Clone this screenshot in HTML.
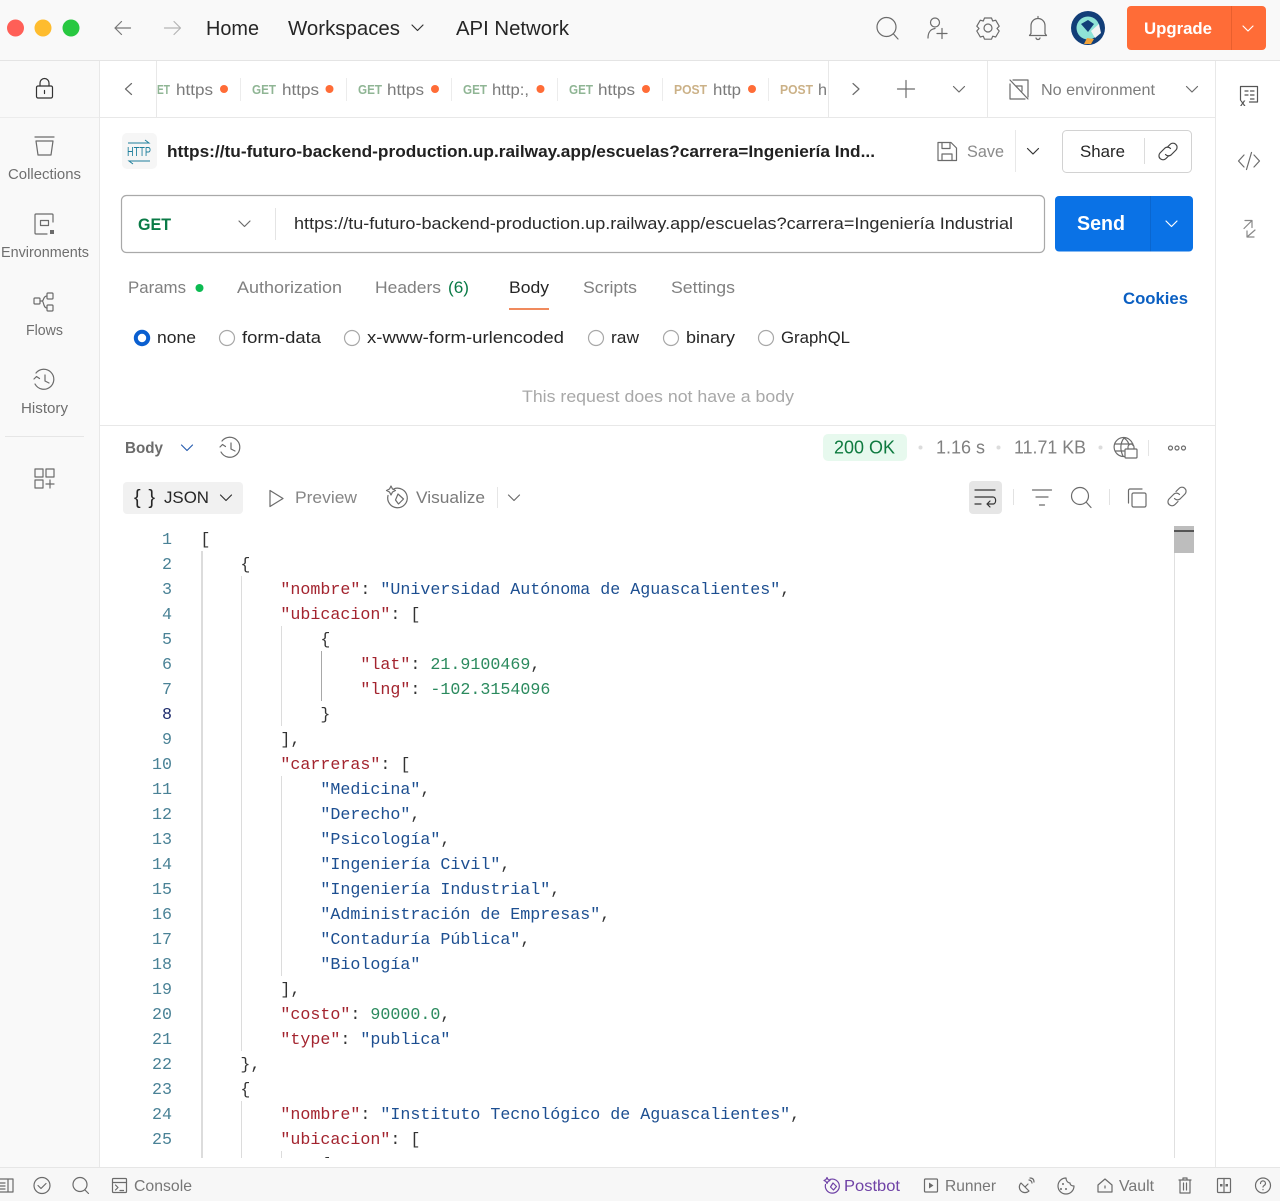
<!DOCTYPE html>
<html lang="en"><head><meta charset="utf-8"><title>Postman</title>
<style>
html,body{margin:0;padding:0;background:#fff;width:1280px;height:1201px;overflow:hidden}
svg{display:block;filter:blur(.3px)}
text{font-family:"Liberation Sans",sans-serif;fill:#6b6b6b;font-size:16px}
.d{fill:#262626}
.g{fill:#7a7a7a}
.l{font-size:14.5px;fill:#6f6f6f}
.tab{font-size:16px;fill:#7a7a7a}
.m{font-size:12.5px;font-weight:bold}
.c{font-family:"Liberation Mono",monospace;font-size:16.67px;fill:#333}
.n{font-family:"Liberation Mono",monospace;font-size:16.67px;fill:#4a8296;text-anchor:end}
.k{fill:#a3242f}.s{fill:#1d4f91}.v{fill:#2b8a5e}
.i{fill:none;stroke:#6b6b6b;stroke-width:1.2;stroke-linecap:round;stroke-linejoin:round}
.ld{stroke:#e2e2e2;stroke-width:1;fill:none}
</style></head><body>
<svg width="1280" height="1201" viewBox="0 0 1280 1201" xmlns="http://www.w3.org/2000/svg">
<defs><clipPath id="ed"><rect x="100" y="525" width="1070" height="633"/></clipPath></defs>
<rect width="1280" height="1201" fill="#fff"/>
<!-- top bar -->
<rect width="1280" height="60" fill="#f9f9f9"/>
<rect y="60" width="1280" height="1" fill="#e4e4e4"/>
<circle cx="15.5" cy="28" r="8.5" fill="#ff5f57"/><circle cx="43" cy="28" r="8.5" fill="#febc2e"/><circle cx="71" cy="28" r="8.5" fill="#28c840"/>
<path class="i" d="M130.500 28H115M121.500 21.500L115 28l6.500 6.500" style="stroke:#777"/>
<path class="i" d="M164.500 28H180M174 21.500L180.500 28 174 34.500" style="stroke:#b5b5b5"/>
<text x="206" y="35" style="font-size:20px" class="d" textLength="53" lengthAdjust="spacingAndGlyphs">Home</text>
<text x="288" y="35" style="font-size:20px" class="d" textLength="112" lengthAdjust="spacingAndGlyphs">Workspaces</text>
<path class="i" d="M412 25l5.500 5.500 5.500-5.500" style="stroke:#333"/>
<text x="456" y="35" style="font-size:20px" class="d" textLength="113" lengthAdjust="spacingAndGlyphs">API Network</text>
<!-- top right icons -->
<circle class="i" cx="886.500" cy="27" r="9.500"/><path class="i" d="M893.500 34l4.500 5"/>
<circle class="i" cx="935" cy="22.500" r="4.500"/><path class="i" d="M928 38c0-6 3-9 7-9.500M937 33.500h10M942 28.500v10"/>
<path class="i" d="M984.500 18h7l1.200 3 3-.8 3.500 6-2.200 2.300 2.200 2.500-3.500 6-3-.8-1.200 3h-7l-1.200-3-3 .8-3.500-6 2.200-2.500-2.200-2.300 3.500-6 3 .8z"/><circle class="i" cx="988" cy="28" r="4"/>
<path class="i" d="M1031 33.500v-8a7 7 0 0 1 14 0v8l1.500 2h-17zM1038 16.500v2M1036 38c.5 2 3.500 2 4 0"/>
<circle cx="1088" cy="28" r="17" fill="#123e78"/><circle cx="1088" cy="28" r="11.500" fill="#8fe3d6"/><path d="M1081 24l7-4 6 4-6 8z" fill="#123e78"/><path d="M1091 31l8-7 2 9-6 5z" fill="#f2f2f2"/><path d="M1084 44l3-6 7 1-3 5z" fill="#f2a33a"/>
<rect x="1127" y="6" width="139" height="44" rx="4" fill="#ff6c37"/><rect x="1231" y="6" width="1" height="44" fill="#e85f2e"/>
<text x="1144" y="34" style="font-size:17px;font-weight:bold;fill:#fff" textLength="68" lengthAdjust="spacingAndGlyphs">Upgrade</text>
<path class="i" d="M1243 26l5 5 5-5" style="stroke:#fff"/>
<!-- sidebar -->
<rect y="61" width="99" height="1107" fill="#f9f9f9"/><rect x="99" y="61" width="1" height="1107" fill="#e8e8e8"/>
<rect y="117" width="99" height="1" fill="#ececec"/>
<rect class="i" x="36.500" y="86" width="16" height="12" rx="1.500" style="stroke:#333"/><path class="i" d="M40 86v-3a4.500 4.500 0 0 1 9 0v3M44.500 90.500v3" style="stroke:#333"/>
<path class="i" d="M35 137h19M36 141h17l-2 14H38z"/>
<text class="l" x="8" y="179" textLength="73" lengthAdjust="spacingAndGlyphs">Collections</text>
<path class="i" d="M53 222v-7a1 1 0 0 0-1-1H36a1 1 0 0 0-1 1v18a1 1 0 0 0 1 1h11"/><rect class="i" x="40.500" y="220.500" width="8" height="5"/><rect x="50" y="230" width="4" height="4" fill="#6b6b6b"/>
<text class="l" x="1" y="257" textLength="88" lengthAdjust="spacingAndGlyphs">Environments</text>
<rect class="i" x="34" y="298" width="6" height="6" rx="1"/><rect class="i" x="47" y="293" width="6" height="6" rx="1"/><rect class="i" x="47" y="305" width="6" height="6" rx="1"/><path class="i" d="M40 301h2c2 0 1-5 5-5M42 301c2 0 1 7 5 7"/>
<text class="l" x="26" y="335" textLength="37" lengthAdjust="spacingAndGlyphs">Flows</text>
<path class="i" d="M36 373a10 10 0 1 1-1 11M34 379l2.500-2.500 3 2M45 375v6l4 2"/>
<text class="l" x="21" y="413" textLength="47" lengthAdjust="spacingAndGlyphs">History</text>
<rect x="5" y="436" width="79" height="1" fill="#e6e6e6"/>
<rect class="i" x="35" y="469" width="8" height="8"/><rect class="i" x="46" y="469" width="8" height="8"/><rect class="i" x="35" y="480" width="8" height="8"/><path class="i" d="M46 484h8M50 480v8"/>
<!-- tabs -->
<rect x="100" y="117" width="1115" height="1" fill="#e8e8e8"/>
<path class="i" d="M131.500 83.500L125.500 89l6 5.500"/>
<rect x="156" y="61" width="1" height="56" fill="#e8e8e8"/>
<text class="m" x="157" y="94" style="fill:#8fb594" textLength="13" lengthAdjust="spacingAndGlyphs">ET</text><text class="tab" x="176" y="95" textLength="37" lengthAdjust="spacingAndGlyphs">https</text><circle cx="224" cy="89" r="4" fill="#ff6c37"/>
<rect x="240" y="78" width="1" height="23" fill="#ececec"/>
<text class="m" x="252" y="94" style="fill:#8fb594" textLength="24" lengthAdjust="spacingAndGlyphs">GET</text><text class="tab" x="282" y="95" textLength="37" lengthAdjust="spacingAndGlyphs">https</text><circle cx="329.500" cy="89" r="4" fill="#ff6c37"/>
<rect x="346" y="78" width="1" height="23" fill="#ececec"/>
<text class="m" x="358" y="94" style="fill:#8fb594" textLength="24" lengthAdjust="spacingAndGlyphs">GET</text><text class="tab" x="387" y="95" textLength="37" lengthAdjust="spacingAndGlyphs">https</text><circle cx="435" cy="89" r="4" fill="#ff6c37"/>
<rect x="451" y="78" width="1" height="23" fill="#ececec"/>
<text class="m" x="463" y="94" style="fill:#8fb594" textLength="24" lengthAdjust="spacingAndGlyphs">GET</text><text class="tab" x="492" y="95" textLength="37" lengthAdjust="spacingAndGlyphs">http:,</text><circle cx="540.500" cy="89" r="4" fill="#ff6c37"/>
<rect x="557" y="78" width="1" height="23" fill="#ececec"/>
<text class="m" x="569" y="94" style="fill:#8fb594" textLength="24" lengthAdjust="spacingAndGlyphs">GET</text><text class="tab" x="598" y="95" textLength="37" lengthAdjust="spacingAndGlyphs">https</text><circle cx="646" cy="89" r="4" fill="#ff6c37"/>
<rect x="662" y="78" width="1" height="23" fill="#ececec"/>
<text class="m" x="674" y="94" style="fill:#cbb187" textLength="33" lengthAdjust="spacingAndGlyphs">POST</text><text class="tab" x="713" y="95" textLength="28" lengthAdjust="spacingAndGlyphs">http</text><circle cx="752" cy="89" r="4" fill="#ff6c37"/>
<rect x="768" y="78" width="1" height="23" fill="#ececec"/>
<text class="m" x="780" y="94" style="fill:#cbb187" textLength="33" lengthAdjust="spacingAndGlyphs">POST</text><text class="tab" x="818" y="95" textLength="9" lengthAdjust="spacingAndGlyphs">h</text>
<rect x="828" y="61" width="1" height="56" fill="#e8e8e8"/>
<path class="i" d="M853 83.500l6 5.500-6 5.500"/>
<path class="i" d="M897.500 89h17M906 80.500v17"/>
<path class="i" d="M953.500 86.500l5.500 5.500 5.500-5.500"/>
<rect x="987" y="61" width="1" height="56" fill="#e8e8e8"/>
<path class="i" d="M1013 80h15v17M1010 80l18 19M1010 84v15h15M1016 86h6v5"/>
<text x="1041" y="95" style="font-size:16px;fill:#7d7d7d" textLength="114" lengthAdjust="spacingAndGlyphs">No environment</text>
<path class="i" d="M1186.500 86.500l5.500 5.500 5.500-5.500"/>
<!-- right panel -->
<rect x="1215" y="61" width="1" height="1107" fill="#e8e8e8"/>
<path class="i" d="M1240.500 100V86.500h17V102h-8M1245 91h3M1250.500 91h3.500M1245 95h3M1250.500 95h3.500M1250.500 99h3.500" style="stroke:#555"/><text x="1240" y="106" style="font-size:10px;font-weight:bold;fill:#555">x</text>
<path class="i" d="M1244 155l-5.500 6 5.500 6M1254 155l5.500 6-5.500 6M1251.500 152.500l-5 17"/>
<path class="i" d="M1245 220.500h7v7M1252 220.500l-8 8M1255 230l-8 7M1247 231v6h7" style="stroke:#888"/>
<!-- title -->
<rect x="122" y="133" width="35" height="36" rx="5" fill="#f6f6f6"/>
<text x="127" y="156" style="font-size:12.5px;fill:#1f7f9c" textLength="24" lengthAdjust="spacingAndGlyphs">HTTP</text>
<path d="M128 143h21l-4-3M150 161h-21l4 3" fill="none" stroke="#1f7f9c" stroke-width="1"/>
<text x="167" y="157" style="font-size:16.500px;font-weight:bold;fill:#212121" textLength="708" lengthAdjust="spacingAndGlyphs">https://tu-futuro-backend-production.up.railway.app/escuelas?carrera=Ingeniería Ind...</text>
<path class="i" d="M938 142.500h13l5.500 5.500v12.500h-18.500zM942 142.500v6h8v-6M942 160.500v-6.500h10v6.500"/>
<text x="967" y="157" style="font-size:17px;fill:#8a8a8a" textLength="37" lengthAdjust="spacingAndGlyphs">Save</text>
<rect x="1015" y="130" width="1" height="42" fill="#e8e8e8"/>
<path class="i" d="M1027.500 148.500l5.500 5.500 5.500-5.500" style="stroke:#333"/>
<rect x="1062.500" y="130.500" width="129" height="42" rx="4" fill="#fff" stroke="#d2d2d2"/>
<text x="1080" y="157" style="font-size:17px" class="d" textLength="45" lengthAdjust="spacingAndGlyphs">Share</text>
<rect x="1144" y="138" width="1" height="26" fill="#dcdcdc"/>
<path class="i" d="M1167 147.500l3-3a4 4 0 0 1 6 5.500l-5 5a4 4 0 0 1-5.500-.500M1169 155.500l-3 3a4 4 0 0 1-6-5.500l5-5a4 4 0 0 1 5.500.500" style="stroke:#444"/>
<!-- url bar -->
<rect x="121.500" y="195.500" width="923" height="57" rx="5" fill="#fff" stroke="#a9a9a9" stroke-width="1.200"/>
<text x="138" y="230" style="font-size:17px;font-weight:bold;fill:#0a7a46" textLength="33" lengthAdjust="spacingAndGlyphs">GET</text>
<path class="i" d="M239 221l5.500 5.500 5.500-5.500"/>
<rect x="275" y="208" width="1" height="32" fill="#e4e4e4"/>
<text x="294" y="229" style="font-size:17px;fill:#2b2b2b" textLength="719" lengthAdjust="spacingAndGlyphs">https://tu-futuro-backend-production.up.railway.app/escuelas?carrera=Ingeniería Industrial</text>
<rect x="1055" y="196" width="138" height="55.500" rx="4" fill="#0a72e6"/><rect x="1150" y="196" width="1" height="55.500" fill="#0a66cf"/>
<text x="1077" y="230" style="font-size:20px;font-weight:bold;fill:#fff" textLength="48" lengthAdjust="spacingAndGlyphs">Send</text>
<path class="i" d="M1166 221l5.500 5.500 5.500-5.500" style="stroke:#fff"/>
<!-- request tabs -->
<text x="128" y="293" style="font-size:17px;fill:#808080" textLength="58" lengthAdjust="spacingAndGlyphs">Params</text><circle cx="199.500" cy="288" r="4" fill="#0cbb52"/>
<text x="237" y="293" style="font-size:17px;fill:#808080" textLength="105" lengthAdjust="spacingAndGlyphs">Authorization</text>
<text x="375" y="293" style="font-size:17px;fill:#808080" textLength="66" lengthAdjust="spacingAndGlyphs">Headers</text>
<text x="448" y="293" style="font-size:17px;fill:#0a7a46" textLength="21" lengthAdjust="spacingAndGlyphs">(6)</text>
<text x="509" y="293" style="font-size:17px" class="d" textLength="40" lengthAdjust="spacingAndGlyphs">Body</text>
<rect x="509" y="308" width="40" height="2" fill="#f08a5d"/>
<text x="583" y="293" style="font-size:17px;fill:#808080" textLength="54" lengthAdjust="spacingAndGlyphs">Scripts</text>
<text x="671" y="293" style="font-size:17px;fill:#808080" textLength="64" lengthAdjust="spacingAndGlyphs">Settings</text>
<text x="1123" y="304" style="font-size:16.500px;font-weight:bold;fill:#0a5fc2" textLength="65" lengthAdjust="spacingAndGlyphs">Cookies</text>
<!-- radios -->
<circle cx="142" cy="338" r="6.200" fill="#fff" stroke="#0a5fd0" stroke-width="4"/>
<text x="157" y="343" style="font-size:17px" class="d" textLength="39" lengthAdjust="spacingAndGlyphs">none</text>
<circle cx="227" cy="338" r="7.500" fill="#fff" stroke="#a8a8a8" stroke-width="1.200"/>
<text x="242" y="343" style="font-size:17px" class="d" textLength="79" lengthAdjust="spacingAndGlyphs">form-data</text>
<circle cx="352" cy="338" r="7.500" fill="#fff" stroke="#a8a8a8" stroke-width="1.200"/>
<text x="367" y="343" style="font-size:17px" class="d" textLength="197" lengthAdjust="spacingAndGlyphs">x-www-form-urlencoded</text>
<circle cx="596" cy="338" r="7.500" fill="#fff" stroke="#a8a8a8" stroke-width="1.200"/>
<text x="611" y="343" style="font-size:17px" class="d" textLength="28" lengthAdjust="spacingAndGlyphs">raw</text>
<circle cx="671" cy="338" r="7.500" fill="#fff" stroke="#a8a8a8" stroke-width="1.200"/>
<text x="686" y="343" style="font-size:17px" class="d" textLength="49" lengthAdjust="spacingAndGlyphs">binary</text>
<circle cx="766" cy="338" r="7.500" fill="#fff" stroke="#a8a8a8" stroke-width="1.200"/>
<text x="781" y="343" style="font-size:17px" class="d" textLength="69" lengthAdjust="spacingAndGlyphs">GraphQL</text>
<text x="522" y="402" style="font-size:17px;fill:#a8a8a8" textLength="272" lengthAdjust="spacingAndGlyphs">This request does not have a body</text>
<!-- response header -->
<rect x="100" y="425" width="1115" height="1" fill="#e8e8e8"/>
<text x="125" y="453" style="font-size:15.500px;font-weight:bold;fill:#6b6b6b" textLength="38" lengthAdjust="spacingAndGlyphs">Body</text>
<path class="i" d="M181.500 445l5.500 5.500 5.500-5.500" style="stroke:#2a5fb0"/>
<path class="i" d="M222 441a10 10 0 1 1-1 11M220 447l2.500-2.500 3 2M231 443v6l4 2"/>
<rect x="823" y="434" width="84" height="27" rx="5" fill="#e7f9ee"/>
<text x="834" y="453.500" style="font-size:18px;fill:#0e7a3f" textLength="61" lengthAdjust="spacingAndGlyphs">200 OK</text>
<circle cx="920.500" cy="447.500" r="2" fill="#dcdcdc"/>
<text x="936" y="453.500" style="font-size:18px;fill:#808080" textLength="49" lengthAdjust="spacingAndGlyphs">1.16 s</text>
<circle cx="998.500" cy="447.500" r="2" fill="#dcdcdc"/>
<text x="1014" y="453.500" style="font-size:18px;fill:#808080" textLength="72" lengthAdjust="spacingAndGlyphs">11.71 KB</text>
<circle cx="1100.500" cy="447.500" r="2" fill="#dcdcdc"/>
<path class="i" d="M1133 445.500a9.500 9.500 0 1 0-9 11M1124 438c-4 5-4 12-1 18M1124 438c3 2 4.500 4 5 7M1115 444h18M1115 451h9"/>
<rect x="1125" y="449" width="12" height="9" rx="1" fill="#fff" stroke="#6b6b6b" stroke-width="1.200"/><path class="i" d="M1128 449v-2a3 3 0 0 1 6 0v2"/>
<rect x="1148" y="440" width="1" height="16" fill="#e4e4e4"/>
<circle class="i" cx="1170.500" cy="448" r="2"/><circle class="i" cx="1177" cy="448" r="2"/><circle class="i" cx="1183.500" cy="448" r="2"/>
<!-- response toolbar -->
<rect x="123" y="482" width="120" height="32" rx="4" fill="#f1f1f1"/>
<text x="134" y="504" style="font-size:20px" class="d" textLength="21" lengthAdjust="spacing">{ }</text>
<text x="164" y="503" style="font-size:17px" class="d" textLength="45" lengthAdjust="spacingAndGlyphs">JSON</text>
<path class="i" d="M220.500 495l5.500 5.500 5.500-5.500" style="stroke:#333"/>
<path class="i" d="M270 490.500l13 8-13 8z"/>
<text x="295" y="503" style="font-size:17px;fill:#868686" textLength="62" lengthAdjust="spacingAndGlyphs">Preview</text>
<path class="i" d="M394 488.800a9.800 9.800 0 1 1-6 6.700M398 494l5.500 5-5 5-3-4zM391 486l1.500 3 3 1.500-3 1.500-1.500 3-1.500-3-3-1.500 3-1.500z"/>
<text x="416" y="503" style="font-size:17px;fill:#7a7a7a" textLength="69" lengthAdjust="spacingAndGlyphs">Visualize</text>
<rect x="497" y="487" width="1" height="21" fill="#e6e6e6"/>
<path class="i" d="M508.500 495l5.500 5.500 5.500-5.500"/>
<rect x="969" y="481" width="33" height="33" rx="4" fill="#e6e6e6"/>
<path class="i" d="M975 490h20M975 497h18c3.500 0 3.500 7 0 7h-6M990 501l-3 3 3 3M975 504h6" style="stroke:#333"/>
<rect x="1013" y="489" width="1" height="16" fill="#e2e2e2"/>
<path class="i" d="M1032.500 490h19M1036 497h12M1039.500 505h5"/>
<circle class="i" cx="1080" cy="496" r="8.500"/><path class="i" d="M1086.500 502.500l4.500 5"/>
<rect x="1109" y="489" width="1" height="16" fill="#e2e2e2"/>
<rect class="i" x="1132" y="493" width="14" height="14" rx="1.500"/><path class="i" d="M1128.500 503v-12.500a1.500 1.500 0 0 1 1.500-1.500h12"/>
<path class="i" d="M1176 491.500l3-3a4 4 0 0 1 6 5.500l-5 5a4 4 0 0 1-5.500-.500M1178 501.500l-3 3a4 4 0 0 1-6-5.500l5-5a4 4 0 0 1 5.500.500"/>
<!-- scrollbar -->
<rect x="1174" y="553" width="1" height="605" fill="#e0e0e0"/>
<rect x="1174" y="526" width="20" height="27" fill="#bdbdbd"/><rect x="1174" y="530" width="20" height="2" fill="#555"/>
<!-- editor -->
<g clip-path="url(#ed)">
<g fill="#dcdcdc">
<rect x="201" y="551" width="2" height="607"/>
<rect x="241" y="576" width="1" height="475"/><rect x="241" y="1101" width="1" height="57"/>
<rect x="281" y="626" width="1" height="100"/><rect x="281" y="776" width="1" height="200"/><rect x="281" y="1151" width="1" height="7"/>
<rect x="321" y="651" width="1" height="50" fill="#a8a8a8"/>
</g>
<text class="n" x="172" y="544">1</text><text class="n" x="172" y="569">2</text><text class="n" x="172" y="594">3</text><text class="n" x="172" y="619">4</text><text class="n" x="172" y="644">5</text><text class="n" x="172" y="669">6</text><text class="n" x="172" y="694">7</text><text class="n" x="172" y="719" style="fill:#1c2a6b">8</text><text class="n" x="172" y="744">9</text><text class="n" x="172" y="769">10</text><text class="n" x="172" y="794">11</text><text class="n" x="172" y="819">12</text><text class="n" x="172" y="844">13</text><text class="n" x="172" y="869">14</text><text class="n" x="172" y="894">15</text><text class="n" x="172" y="919">16</text><text class="n" x="172" y="944">17</text><text class="n" x="172" y="969">18</text><text class="n" x="172" y="994">19</text><text class="n" x="172" y="1019">20</text><text class="n" x="172" y="1044">21</text><text class="n" x="172" y="1069">22</text><text class="n" x="172" y="1094">23</text><text class="n" x="172" y="1119">24</text><text class="n" x="172" y="1144">25</text>
<g transform="translate(-.6 0)">
<text class="c" x="201" y="544">[</text>
<text class="c" x="241" y="569">{</text>
<text class="c" x="281" y="594"><tspan class="k">"nombre"</tspan>: <tspan class="s">"Universidad Autónoma de Aguascalientes"</tspan>,</text>
<text class="c" x="281" y="619"><tspan class="k">"ubicacion"</tspan>: [</text>
<text class="c" x="321" y="644">{</text>
<text class="c" x="361" y="669"><tspan class="k">"lat"</tspan>: <tspan class="v">21.9100469</tspan>,</text>
<text class="c" x="361" y="694"><tspan class="k">"lng"</tspan>: <tspan class="v">-102.3154096</tspan></text>
<text class="c" x="321" y="719">}</text>
<text class="c" x="281" y="744">],</text>
<text class="c" x="281" y="769"><tspan class="k">"carreras"</tspan>: [</text>
<text class="c" x="321" y="794"><tspan class="s">"Medicina"</tspan>,</text>
<text class="c" x="321" y="819"><tspan class="s">"Derecho"</tspan>,</text>
<text class="c" x="321" y="844"><tspan class="s">"Psicología"</tspan>,</text>
<text class="c" x="321" y="869"><tspan class="s">"Ingeniería Civil"</tspan>,</text>
<text class="c" x="321" y="894"><tspan class="s">"Ingeniería Industrial"</tspan>,</text>
<text class="c" x="321" y="919"><tspan class="s">"Administración de Empresas"</tspan>,</text>
<text class="c" x="321" y="944"><tspan class="s">"Contaduría Pública"</tspan>,</text>
<text class="c" x="321" y="969"><tspan class="s">"Biología"</tspan></text>
<text class="c" x="281" y="994">],</text>
<text class="c" x="281" y="1019"><tspan class="k">"costo"</tspan>: <tspan class="v">90000.0</tspan>,</text>
<text class="c" x="281" y="1044"><tspan class="k">"type"</tspan>: <tspan class="s">"publica"</tspan></text>
<text class="c" x="241" y="1069">},</text>
<text class="c" x="241" y="1094">{</text>
<text class="c" x="281" y="1119"><tspan class="k">"nombre"</tspan>: <tspan class="s">"Instituto Tecnológico de Aguascalientes"</tspan>,</text>
<text class="c" x="281" y="1144"><tspan class="k">"ubicacion"</tspan>: [</text>
<text class="c" x="321" y="1169">{</text>
</g>
</g>
<!-- bottom bar -->
<rect y="1167" width="1280" height="34" fill="#f7f7f7"/><rect y="1167" width="1280" height="1" fill="#e6e6e6"/>
<path class="i" d="M0 1179h13v13H0M8 1179v13M0 1183h5M0 1186h5M0 1189h5"/>
<circle class="i" cx="42" cy="1185.500" r="8"/><path class="i" d="M38 1185.500l3 3 5-5"/>
<circle class="i" cx="80" cy="1184.500" r="7"/><path class="i" d="M85 1190l3.500 3.500"/>
<rect class="i" x="112.500" y="1178.500" width="14" height="14" rx="1"/><path class="i" d="M112.500 1182.500h14M115.500 1185l2.500 2.500-2.500 2.500M120 1190.500h3.500"/>
<text x="134" y="1191" style="font-size:16px;fill:#777" textLength="58" lengthAdjust="spacingAndGlyphs">Console</text>
<path class="i" d="M830 1179.500a7 7 0 1 1-4.500 5M833 1183l3.500 3.500-3 3.500-3-3zM827 1177.500l1 2 2 1-2 1-1 2-1-2-2-1 2-1z" style="stroke:#6f42a6"/>
<text x="844" y="1191" style="font-size:16px;fill:#6f42a6" textLength="56" lengthAdjust="spacingAndGlyphs">Postbot</text>
<rect class="i" x="924.500" y="1179" width="13" height="13" rx="1"/><path d="M929 1182.500l4.500 3-4.500 3z" fill="#6b6b6b"/>
<text x="945" y="1191" style="font-size:16px;fill:#777" textLength="51" lengthAdjust="spacingAndGlyphs">Runner</text>
<path class="i" d="M1021 1183l8 8a5.500 5.500 0 0 1-8-8zM1025 1187l3-3M1029 1180c1.500 0 3 1.500 3 3M1030 1178c2.500 0 4 1.500 4 4"/>
<path class="i" d="M1066 1178a8 8 0 1 0 8 8c-2 0-4-1-4-3-2 0-4-2-4-5z"/><circle cx="1063" cy="1184" r="1" fill="#6b6b6b"/><circle cx="1066" cy="1189" r="1" fill="#6b6b6b"/><circle cx="1061" cy="1189" r="1" fill="#6b6b6b"/>
<path class="i" d="M1098 1185l7-6 7 6v7h-14zM1105 1186v2"/>
<text x="1119" y="1191" style="font-size:16px;fill:#777" textLength="35" lengthAdjust="spacingAndGlyphs">Vault</text>
<path class="i" d="M1179 1180h12M1183 1180v-2h4v2M1180 1180v13h10v-13M1183.500 1183v7M1186.500 1183v7"/>
<rect class="i" x="1217.500" y="1178.500" width="13" height="14" rx="1"/><path class="i" d="M1224 1178.500v14"/><rect x="1220" y="1184" width="2.500" height="2.500" fill="#6b6b6b"/><rect x="1225.500" y="1184" width="2.500" height="2.500" fill="#6b6b6b"/>
<circle class="i" cx="1263" cy="1185.500" r="7.500"/><path class="i" d="M1260.500 1183.500c0-3.500 5-3.500 5 0 0 2-2.500 2-2.500 3.500M1263 1189.500v.3"/>
</svg>
</body></html>
